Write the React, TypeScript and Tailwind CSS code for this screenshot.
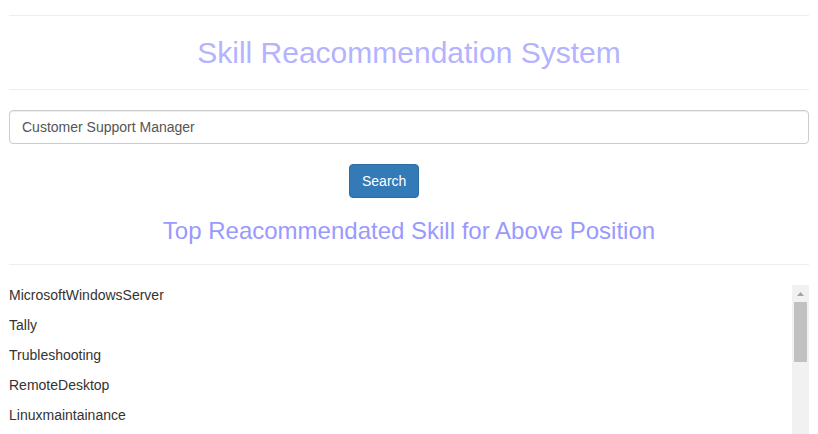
import React from "react"

const skills = [
  "MicrosoftWindowsServer",
  "Tally",
  "Trubleshooting",
  "RemoteDesktop",
  "Linuxmaintainance",
]

export default function App() {
  return (
    <div className="h-[434px] overflow-hidden bg-white font-['Liberation_Sans',Arial,sans-serif] text-[14px] leading-[20px] text-[#333]">
      <div className="px-[9px] pt-[15px]">
        <div className="border-t border-[#eee]" />
        <h2 className="mt-5 mb-5 text-center text-[30px] leading-[33px] text-[#b3b3ff]">
          Skill Reacommendation System
        </h2>
        <div className="border-t border-[#eee]" />

        <input
          readOnly
          value="Customer Support Manager"
          className="mt-5 block h-[34px] w-full rounded-[4px] border border-[#ccc] px-3 text-[14px] text-[#555] shadow-[inset_0_1px_1px_rgba(0,0,0,0.075)] outline-none"
        />

        <div className="mt-5 flex pl-[340px]">
          <button className="h-[34px] rounded-[4px] border border-[#2e6da4] bg-[#337ab7] px-3 text-[14px] text-white">
            Search
          </button>
        </div>

        <h3 className="mt-5 mb-5 text-center text-[24px] leading-[26px] text-[#9999ff]">
          Top Reacommendated Skill for Above Position
        </h3>
        <div className="border-t border-[#eee]" />

        {/* result list with its scrollbar */}
        <div className="mt-5 flex h-[300px]">
          <div className="flex-1 overflow-hidden">
            {skills.map((s) => (
              <p key={s} className="mb-[10px]">{s}</p>
            ))}
          </div>
          <div className="flex w-[17px] flex-col bg-[#f1f1f1]">
            <div className="flex h-[17px] items-center justify-center">
              <svg width="7" height="4" viewBox="0 0 7 4">
                <polygon points="3.5,0 7,4 0,4" fill="#a3a3a3" />
              </svg>
            </div>
            <div className="mx-[2px] h-[60px] bg-[#c1c1c1]" />
          </div>
        </div>
      </div>
    </div>
  )
}
